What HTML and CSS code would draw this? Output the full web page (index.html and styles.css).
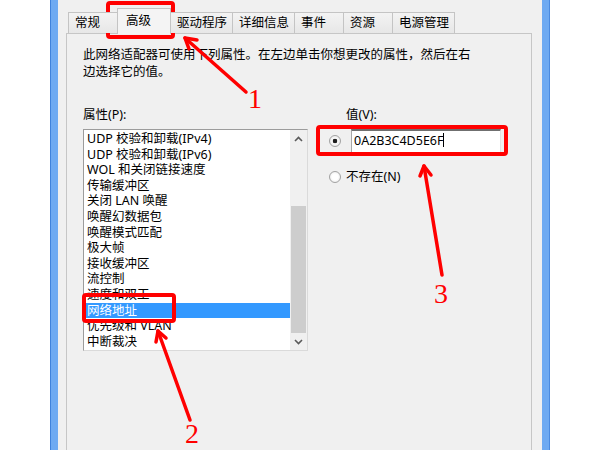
FILE: index.html
```html
<!DOCTYPE html>
<html lang="zh-CN">
<head>
    <meta charset="UTF-8">
    <meta name="viewport" content="width=device-width, initial-scale=1.0">
    <title>网络适配器属性 - 高级</title>
    <link rel="stylesheet" href="styles.css">
</head>
<body>
    <div class="window">
        <div class="dialog">
            <div class="tabs">
                <div class="tab">常规</div>
                <div class="tab active">高级</div>
                <div class="tab">驱动程序</div>
                <div class="tab">详细信息</div>
                <div class="tab">事件</div>
                <div class="tab">资源</div>
                <div class="tab">电源管理</div>
            </div>

            <div class="panel">
                <p class="desc">此网络适配器可使用下列属性。在左边单击你想更改的属性，然后在右<br>边选择它的值。</p>

                <div class="columns">
                    <div class="prop-col">
                        <div class="label">属性(P):</div>
                        <div class="listbox">
                            <ul class="items">
                                <li>UDP 校验和卸载(IPv4)</li>
                                <li>UDP 校验和卸载(IPv6)</li>
                                <li>WOL 和关闭链接速度</li>
                                <li>传输缓冲区</li>
                                <li>关闭 LAN 唤醒</li>
                                <li>唤醒幻数据包</li>
                                <li>唤醒模式匹配</li>
                                <li>极大帧</li>
                                <li>接收缓冲区</li>
                                <li>流控制</li>
                                <li>速度和双工</li>
                                <li class="selected">网络地址</li>
                                <li>优先级和 VLAN</li>
                                <li>中断裁决</li>
                            </ul>
                            <div class="scrollbar">
                                <div class="sb-btn">
                                    <svg width="9" height="6" viewBox="0 0 9 6"><polyline points="1,5 4.5,1.5 8,5" fill="none" stroke="#5a5a5a" stroke-width="1.6"/></svg>
                                </div>
                                <div class="sb-track">
                                    <div class="sb-thumb"></div>
                                </div>
                                <div class="sb-btn">
                                    <svg width="9" height="6" viewBox="0 0 9 6"><polyline points="1,1 4.5,4.5 8,1" fill="none" stroke="#5a5a5a" stroke-width="1.6"/></svg>
                                </div>
                            </div>
                        </div>
                    </div>

                    <div class="value-col">
                        <div class="label value-label">值(V):</div>
                        <div class="radio-row">
                            <span class="radio checked"></span>
                            <div class="textbox">0A2B3C4D5E6F<span class="caret"></span></div>
                        </div>
                        <div class="radio-row none-row">
                            <span class="radio"></span>
                            <span>不存在(N)</span>
                        </div>
                    </div>
                </div>
            </div>
        </div>
    </div>

    <!-- red annotation marks drawn over the dialog -->
    <svg class="marks" width="600" height="450" viewBox="0 0 600 450">
        <g fill="none" stroke="#ff0000" stroke-width="4" stroke-linecap="round" stroke-linejoin="round">
            <rect x="108" y="3" width="65" height="34" rx="2"/>
            <rect x="84" y="295" width="90" height="26" rx="2"/>
            <rect x="318" y="127" width="188" height="27" rx="2"/>
        </g>
        <g fill="none" stroke="#ff0000" stroke-width="3.5" stroke-linecap="round" stroke-linejoin="round">
            <line x1="246" y1="92" x2="185" y2="38"/>
            <polyline points="189,49 185,38 197,40"/>
            <line x1="190" y1="420" x2="158" y2="331"/>
            <polyline points="156,342 158,331 166,338"/>
            <line x1="442" y1="275" x2="424" y2="166"/>
            <polyline points="420,176 424,166 431,175"/>
        </g>
        <g class="mark-num">
            <text x="255" y="108">1</text>
            <text x="192" y="443">2</text>
            <text x="441" y="303">3</text>
        </g>
    </svg>
</body>
</html>
```

FILE: styles.css
```css
* {
    box-sizing: border-box;
}

body {
    margin: 0;
    width: 600px;
    height: 450px;
    overflow: hidden;
    position: relative;
    background: #ffffff;
    font-family: "Noto Sans", "Noto Sans CJK SC", sans-serif;
    font-size: 12.5px;
    color: #000;
}

/* window frame */
.window {
    margin-left: 50px;
    width: 500px;
    height: 450px;
    padding: 0 7px;
    background: #6eaaf2;
    border-left: 1px solid #3f82dc;
    border-right: 1px solid #4a8ae0;
}

.dialog {
    height: 100%;
    background: #f0f0f0;
    padding: 8px 10px 0 8px;
}

/* tab strip */
.tabs {
    display: flex;
    align-items: flex-end;
    height: 25px;
    padding-left: 2px;
    position: relative;
    z-index: 1;
}

.tab {
    height: 21px;
    min-width: 50px;
    padding: 0 5px 0 6px;
    margin-left: -1px;
    border: 1px solid #c4c4c4;
    border-bottom: none;
    background: linear-gradient(#f3f3f3, #e7e7e7);
    line-height: 20px;
    white-space: nowrap;
}

.tab:first-child {
    margin-left: 0;
}

.tab.active {
    height: 26px;
    min-width: 54px;
    margin-bottom: -1px;
    padding-left: 8px;
    background: #f4f4f4;
    line-height: 24px;
}

.panel {
    height: 430px;
    border: 1px solid #c6c6c6;
    border-bottom: none;
    background: #f0f0f0;
    padding: 12px 16px 0;
}

.desc {
    margin: 0;
    line-height: 17px;
}

.columns {
    display: flex;
    margin-top: 27px;
}

.label {
    line-height: 16px;
    height: 16px;
    margin-bottom: 6px;
}

/* property list */
.prop-col {
    width: 225px;
}

.listbox {
    display: flex;
    height: 222px;
    background: #ffffff;
    border: 1px solid;
    border-color: #9c9c9c #dadada #dadada #9c9c9c;
}

.items {
    flex: 1;
    list-style: none;
    margin: 0;
    padding: 1px 0 0;
}

.items li {
    height: 15.6px;
    line-height: 15.6px;
    padding-left: 3px;
    white-space: nowrap;
}

.items li.selected {
    background: #3399ff;
    color: #ffffff;
}

.scrollbar {
    width: 17px;
    display: flex;
    flex-direction: column;
    background: #f0f0f0;
}

.sb-btn {
    height: 17px;
    display: flex;
    align-items: center;
    justify-content: center;
}

.sb-track {
    flex: 1;
    display: flex;
    flex-direction: column;
    justify-content: flex-end;
}

.sb-thumb {
    height: 127px;
    margin: 0 1px;
    background: #cdcdcd;
}

/* value side */
.value-col {
    margin-left: 21px;
}

.value-label {
    padding-left: 17px;
}

.radio-row {
    display: flex;
    align-items: center;
}

.radio {
    width: 12px;
    height: 12px;
    flex-shrink: 0;
    margin-right: 10px;
    border-radius: 50%;
    border: 1px solid #a2a2a2;
    background: radial-gradient(circle, #ffffff 40%, #e4e4e4 100%);
}

.radio.checked {
    background: radial-gradient(circle, #1e1e1e 0 2px, #fafafa 2.6px, #e2e2e2 100%);
}

.textbox {
    width: 150px;
    height: 24px;
    padding-left: 2px;
    background: #ffffff;
    border: 1px solid;
    border-color: #6f6f6f #e2e2e2 #e2e2e2 #a8a8a8;
    border-top-width: 2px;
    line-height: 20px;
    white-space: nowrap;
}

.caret {
    display: inline-block;
    width: 1px;
    height: 14px;
    background: #000;
    vertical-align: -2px;
}

.none-row {
    margin-top: 16px;
    line-height: 16px;
}

.none-row .radio {
    margin-right: 5px;
}

/* annotations */
.marks {
    position: absolute;
    top: 0;
    left: 0;
    pointer-events: none;
}

.mark-num text {
    font-family: "Liberation Serif", serif;
    font-size: 28px;
    fill: #ff0000;
    text-anchor: middle;
}
```
